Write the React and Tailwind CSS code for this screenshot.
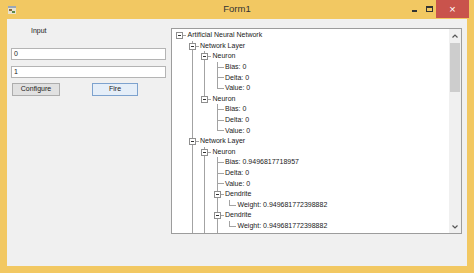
import React from "react";

const tree = {
  label: "Artificial Neural Network",
  children: [
    {
      label: "Network Layer",
      children: [
        { label: "Neuron", children: [{ label: "Bias: 0" }, { label: "Delta: 0" }, { label: "Value: 0" }] },
        { label: "Neuron", children: [{ label: "Bias: 0" }, { label: "Delta: 0" }, { label: "Value: 0" }] },
      ],
    },
    {
      label: "Network Layer",
      children: [
        {
          label: "Neuron",
          children: [
            { label: "Bias: 0.9496817718957" },
            { label: "Delta: 0" },
            { label: "Value: 0" },
            { label: "Dendrite", children: [{ label: "Weight: 0.949681772398882" }] },
            { label: "Dendrite", children: [{ label: "Weight: 0.949681772398882" }] },
            { label: "Dendrite", children: [{ label: "Weight: 0.949681772398882" }] },
          ],
        },
        { label: "Neuron", children: [{ label: "Bias: 0" }] },
      ],
    },
    { label: "Network Layer", children: [{ label: "Neuron" }] },
  ],
};

// flatten tree into rows, remembering which ancestor lines keep going
const flatten = (nodes, depth, ancestors, out) => {
  nodes.forEach((n, i) => {
    const isLast = i === nodes.length - 1;
    out.push({ label: n.label, depth, hasChildren: !!(n.children && n.children.length), isLast, ancestors });
    if (n.children) flatten(n.children, depth + 1, [...ancestors, !isLast], out);
  });
  return out;
};

// only what fits in the box: 19 rows plus the top sliver of the next one
const rows = flatten([tree], 0, [], []).slice(0, 20);

const line = "absolute bg-[#a3a3a3]";

const TreeRow = ({ row, partial }) => {
  const cells = [];
  for (let k = 0; k <= row.depth; k++) {
    const own = k === row.depth;
    cells.push(
      <div key={k} className="relative w-[12.5px] h-full shrink-0">
        {!own && row.ancestors[k] && <div className={`${line} left-[6px] top-0 w-px h-full`} />}
        {own && row.depth > 0 && <div className={`${line} left-[6px] top-0 w-px h-1/2`} />}
        {own && row.depth > 0 && !row.isLast && <div className={`${line} left-[6px] top-1/2 w-px h-1/2`} />}
        {own && <div className={`${line} left-[6px] top-[5px] w-[7px] h-px`} />}
        {own && row.hasChildren && (
          <div className="absolute left-[3px] top-[2px] w-[7px] h-[7px] border border-[#8f8f8f] bg-white flex items-center justify-center">
            <div className="w-[3px] h-px bg-[#333]" />
          </div>
        )}
      </div>
    );
  }
  return (
    <div className="flex h-[10.6px] items-center">
      {cells}
      {!partial && (
        <span className="ml-[2px] whitespace-nowrap text-[7px] leading-[10px] text-[#1a1a1a]">{row.label}</span>
      )}
    </div>
  );
};

const App = () => {
  return (
    <div
      className="w-[474px] h-[273px] bg-[#f2c862] flex flex-col overflow-hidden"
      style={{ fontFamily: '"Liberation Sans", Arial, sans-serif' }}
    >
      {/* Title bar */}
      <div className="h-[19px] grid grid-cols-[1fr_auto_1fr] shrink-0">
        <div className="flex items-center pl-[8px]">
          <svg width="8" height="8" viewBox="0 0 8 8">
            <rect x="0" y="0" width="8" height="8" fill="#e8e2d0" />
            <rect x="0" y="0" width="8" height="2" fill="#9aa7b8" />
            <rect x="1" y="3" width="3" height="2" fill="#8a6b3e" />
            <rect x="4" y="5" width="3" height="2" fill="#5b8a4a" />
          </svg>
        </div>
        <div className="flex items-center text-[9.5px] text-[#333]">Form1</div>
        <div className="flex justify-end items-start pr-[5px]">
          <div className="w-[16px] h-[18px] flex items-center justify-center">
            <div className="w-[5px] h-[2px] bg-[#333] mt-[3px]" />
          </div>
          <div className="w-[14px] h-[18px] flex items-center justify-center">
            <div className="w-[7px] h-[6px] border border-[#333] border-t-2 mb-[1px]" />
          </div>
          <div className="w-[33px] h-[18px] bg-[#c9534c] flex items-center justify-center text-white text-[11px] leading-none">
            ×
          </div>
        </div>
      </div>

      {/* Client area */}
      <div className="mx-[7px] h-[247px] bg-[#f0f0f0] flex items-start">
        <div className="w-[164px] shrink-0 flex flex-col">
          <div className="mt-[7px] pl-[24px] text-[7px] leading-[10px] text-[#1a1a1a]">Input</div>
          <div className="mt-[12px] ml-[4px] w-[155px] h-[12px] bg-white border border-[#b4b4b4] flex items-center pl-[2px] text-[7px] text-[#1a1a1a]">
            0
          </div>
          <div className="mt-[6px] ml-[4px] w-[155px] h-[12px] bg-white border border-[#b4b4b4] flex items-center pl-[2px] text-[7px] text-[#1a1a1a]">
            1
          </div>
          <div className="mt-[5px] flex">
            <button className="ml-[5px] w-[48px] h-[13px] bg-[#e1e1e1] border border-[#adadad] text-[7px] text-[#1a1a1a] flex items-center justify-center">
              Configure
            </button>
            <button className="ml-[32px] w-[46px] h-[13px] bg-[#e5eef8] border border-[#7da2ce] text-[7px] text-[#1a1a1a] flex items-center justify-center">
              Fire
            </button>
          </div>
        </div>

        {/* Tree view */}
        <div className="mt-[9px] w-[291px] h-[206px] border border-[#9c9c9c] bg-white flex">
          <div className="flex-1 overflow-hidden pl-[1px] pt-[1px]">
            {rows.map((r, i) => (
              <TreeRow key={i} row={r} partial={i === rows.length - 1} />
            ))}
          </div>
          <div className="w-[12px] bg-[#f0f0f0] flex flex-col items-center">
            <div className="h-[13px] flex items-center justify-center">
              <svg width="6" height="4" viewBox="0 0 6 4">
                <path d="M0.5 3.5 L3 1 L5.5 3.5" fill="none" stroke="#555" strokeWidth="1.2" />
              </svg>
            </div>
            <div className="mt-[1px] w-[10px] h-[49px] bg-[#cdcdcd]" />
            <div className="flex-1" />
            <div className="h-[13px] flex items-center justify-center">
              <svg width="6" height="4" viewBox="0 0 6 4">
                <path d="M0.5 0.5 L3 3 L5.5 0.5" fill="none" stroke="#555" strokeWidth="1.2" />
              </svg>
            </div>
          </div>
        </div>
      </div>
    </div>
  );
};

export default App;
